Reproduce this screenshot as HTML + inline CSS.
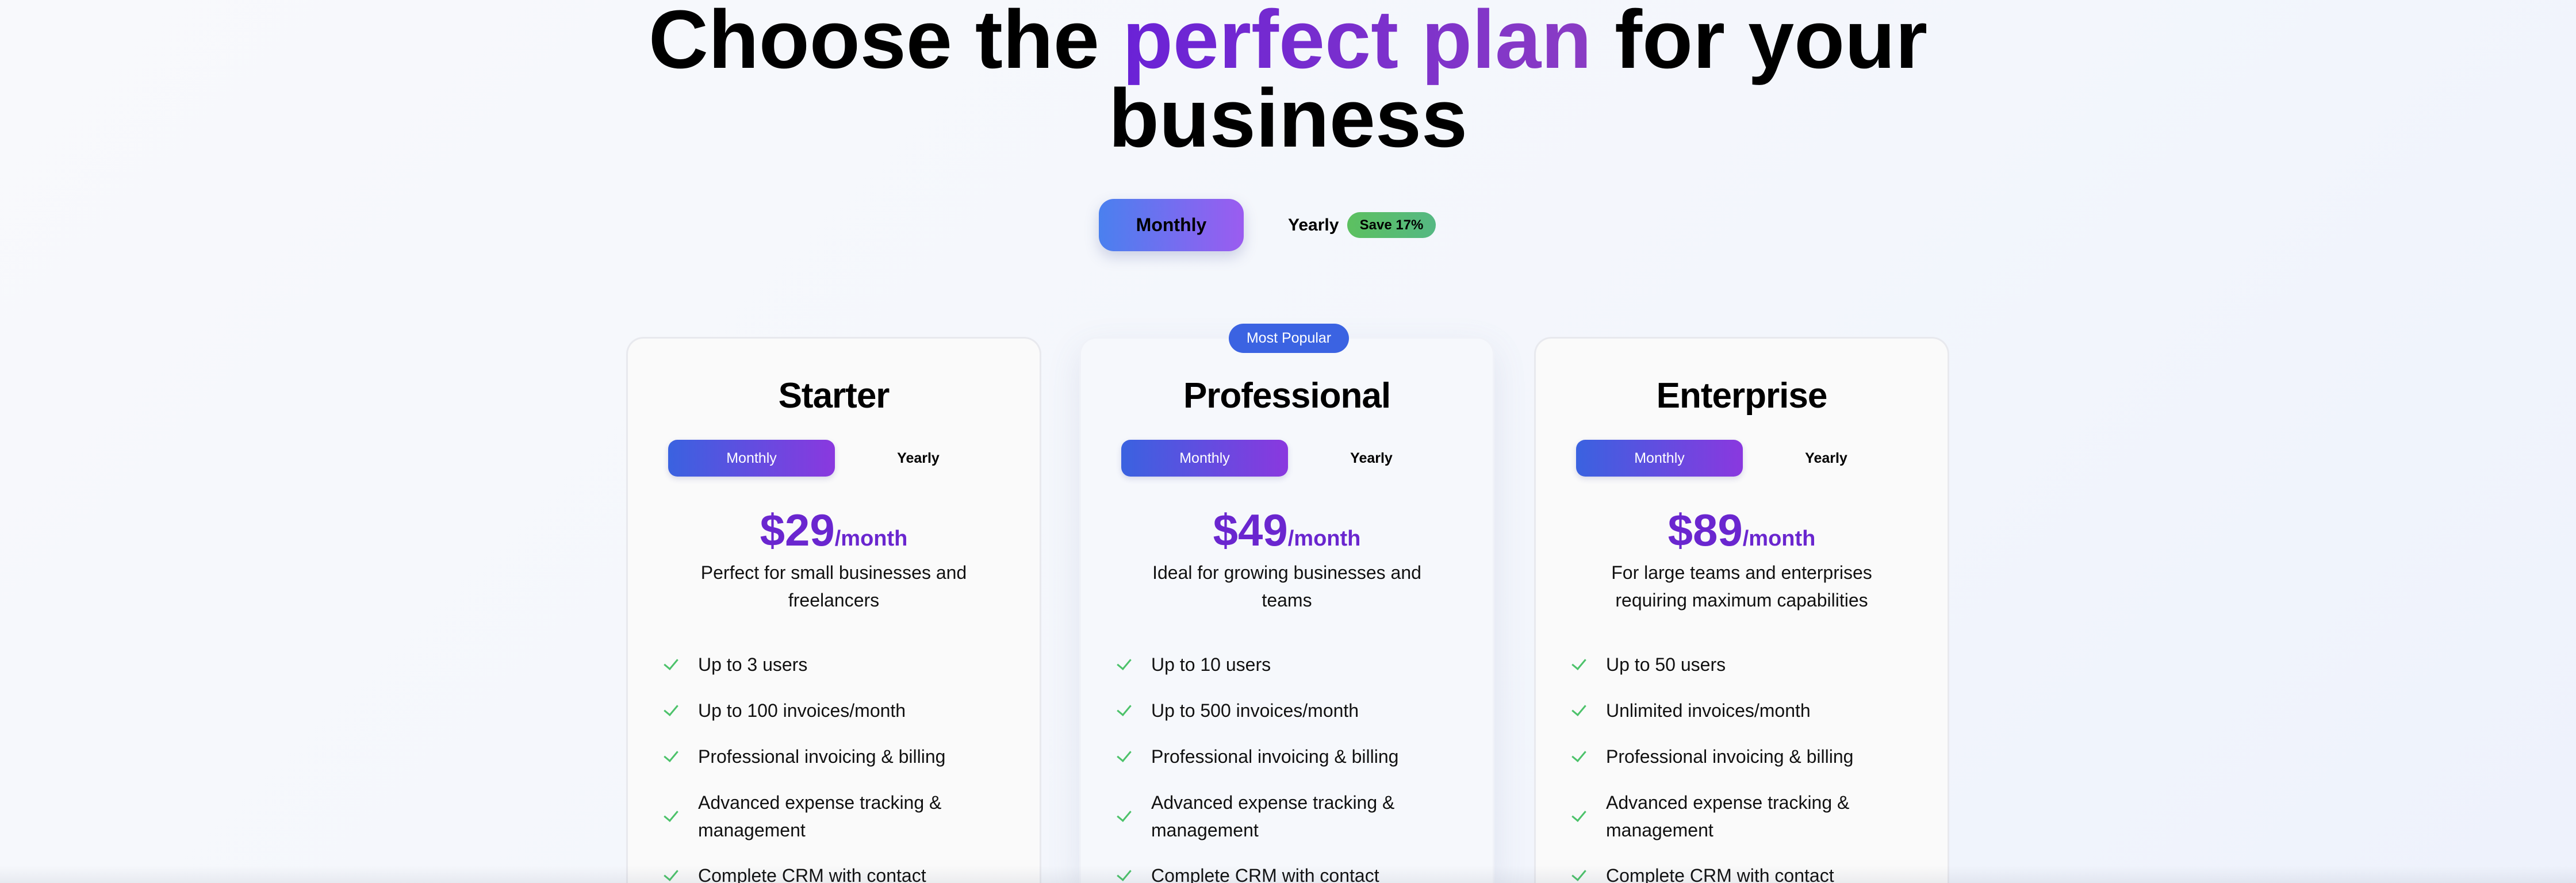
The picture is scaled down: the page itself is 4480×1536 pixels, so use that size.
<!DOCTYPE html>
<html><head><meta charset="utf-8"><style>
*{margin:0;padding:0;box-sizing:border-box}
html,body{width:4480px;height:1536px;overflow:hidden}
body{font-family:"Liberation Sans",sans-serif;background:linear-gradient(135deg,#f8f9fc 0%,#f3f6fc 60%,#eef2fc 100%);position:relative;color:#000}
h1{position:absolute;top:0;left:0;width:4480px;text-align:center;font-size:144px;line-height:137px;font-weight:800;letter-spacing:0}
h1 .g{background:linear-gradient(90deg,#6a22d6,#8a3cc4);-webkit-background-clip:text;color:transparent}
.tmon{position:absolute;left:1911px;top:346px;width:252px;height:91px;border-radius:26px;background:linear-gradient(90deg,#4a80ef,#9b5cf0);box-shadow:0 10px 24px rgba(80,90,160,.25);font-weight:700;font-size:32px;line-height:91px;text-align:center}
.tyr{position:absolute;left:2240px;top:369px;font-weight:700;font-size:30px;line-height:45px}
.save{position:absolute;left:2343px;top:369px;width:154px;height:45px;border-radius:23px;background:linear-gradient(90deg,#5cc060,#55b883);font-weight:700;font-size:24px;line-height:45px;text-align:center}
.card{position:absolute;top:586px;width:722px;height:950px;border-radius:30px 30px 0 0;background:#fafafa;border:3px solid #e8e9ee;border-bottom:none;overflow:hidden}
.card.pro{background:#f6f8fc;border-color:#f0f2f8;box-shadow:0 20px 60px rgba(90,100,150,.12)}
.badge{position:absolute;left:2137px;top:563px;width:209px;height:51px;border-radius:26px;background:#3b63e2;color:#fff;font-size:25px;line-height:51px;text-align:center;z-index:2}
.t{position:absolute;top:64px;left:0;width:100%;text-align:center;font-size:62px;font-weight:800;line-height:72px;letter-spacing:-1px}
.tg{position:absolute;top:176px;left:70px;width:578px;height:64px}
.tg .m{position:absolute;left:0;top:0;width:290px;height:64px;border-radius:16px;background:linear-gradient(90deg,#3a62e0,#8a38df);color:#fff;font-size:25px;line-height:64px;text-align:center;box-shadow:0 4px 10px rgba(80,80,160,.2)}
.tg .y{position:absolute;left:290px;top:0;width:290px;height:64px;font-size:25px;line-height:64px;text-align:center;font-weight:600}
.p{position:absolute;top:293px;left:0;width:100%;text-align:center;color:#6a26cf;font-weight:800;line-height:80px}
.p b{font-size:78px}.p span{font-size:38px;font-weight:700}
.d{position:absolute;top:383px;left:100px;right:100px;text-align:center;font-size:32px;line-height:48px;color:#111}
.f{position:absolute;left:122px;right:40px;font-size:32px;line-height:48px;color:#111}
.f:before{content:"";position:absolute;left:-54px;top:50%;width:11px;height:20px;border-right:3px solid #4cc26a;border-bottom:3px solid #4cc26a;transform:translateY(-65%) rotate(40deg)}
.bot{position:absolute;left:0;right:0;bottom:0;height:30px;background:linear-gradient(180deg,rgba(0,0,0,0),rgba(60,70,100,.08))}
</style></head><body>
<h1>Choose the <span class="g">perfect plan</span> for your<br>business</h1>
<div class="tmon">Monthly</div>
<div class="tyr">Yearly</div>
<div class="save">Save 17%</div>
<div class="badge">Most Popular</div>

<div class="card" style="left:1089px">
<div class="t">Starter</div>
<div class="tg"><div class="m">Monthly</div><div class="y">Yearly</div></div>
<div class="p"><b>$29</b><span>/month</span></div>
<div class="d">Perfect for small businesses and freelancers</div>
<div class="f" style="top:543px">Up to 3 users</div>
<div class="f" style="top:623px">Up to 100 invoices/month</div>
<div class="f" style="top:703px">Professional invoicing &amp; billing</div>
<div class="f" style="top:783px">Advanced expense tracking &amp; management</div>
<div class="f" style="top:910px">Complete CRM with contact</div>
</div>

<div class="card pro" style="left:1877px">
<div class="t">Professional</div>
<div class="tg"><div class="m">Monthly</div><div class="y">Yearly</div></div>
<div class="p"><b>$49</b><span>/month</span></div>
<div class="d">Ideal for growing businesses and teams</div>
<div class="f" style="top:543px">Up to 10 users</div>
<div class="f" style="top:623px">Up to 500 invoices/month</div>
<div class="f" style="top:703px">Professional invoicing &amp; billing</div>
<div class="f" style="top:783px">Advanced expense tracking &amp; management</div>
<div class="f" style="top:910px">Complete CRM with contact</div>
</div>

<div class="card" style="left:2668px">
<div class="t">Enterprise</div>
<div class="tg"><div class="m">Monthly</div><div class="y">Yearly</div></div>
<div class="p"><b>$89</b><span>/month</span></div>
<div class="d">For large teams and enterprises requiring maximum capabilities</div>
<div class="f" style="top:543px">Up to 50 users</div>
<div class="f" style="top:623px">Unlimited invoices/month</div>
<div class="f" style="top:703px">Professional invoicing &amp; billing</div>
<div class="f" style="top:783px">Advanced expense tracking &amp; management</div>
<div class="f" style="top:910px">Complete CRM with contact</div>
</div>
<div class="bot"></div>
</body></html>
